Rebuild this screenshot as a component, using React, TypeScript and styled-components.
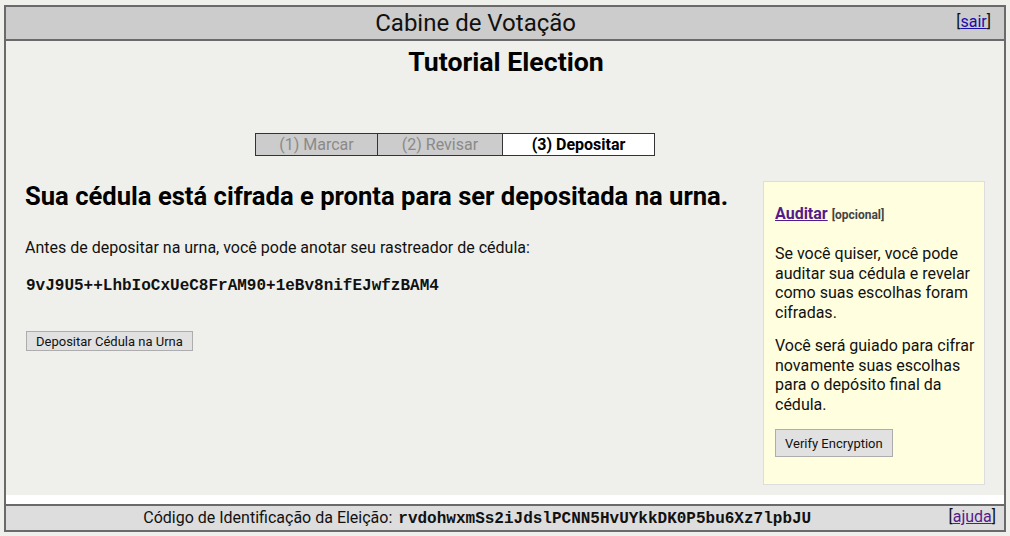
import React from "react";
import styled, { createGlobalStyle } from "styled-components";

const Global = createGlobalStyle`
  html, body { margin: 0; padding: 0; background: #eff0eb; }
  body { font-family: Roboto, "Liberation Sans", Arial, sans-serif; color: #111; }
  * { box-sizing: border-box; }
`;

const Frame = styled.div`
  margin: 5px 4px 0 4px;
  width: 1002px;
  height: 527px;
  border: 2px solid #6a6a6a;
  display: flex;
  flex-direction: column;
  background: #fff;
`;

const Bar = styled.div<{ $h: number; $bg: string; $top?: boolean; $pr: number }>`
  height: ${(p) => p.$h}px;
  background: ${(p) => p.$bg};
  ${(p) => (p.$top ? "border-top" : "border-bottom")}: 2px solid #6a6a6a;
  display: flex;
  align-items: center;
  padding-right: ${(p) => p.$pr}px;
`;

const BarText = styled.div<{ $size: number; $pr?: number }>`
  flex: 1;
  text-align: center;
  font-size: ${(p) => p.$size}px;
  padding-right: ${(p) => p.$pr ?? 0}px;
  color: #111;
  white-space: nowrap;
`;

const BarLink = styled.div<{ $color: string; $dy: number }>`
  font-size: 16px;
  color: #111;
  align-self: flex-start;
  margin-top: ${(p) => p.$dy}px;
  a { color: ${(p) => p.$color}; }
`;

const Content = styled.div`
  height: 454px;
  background: #eff0eb;
  padding: 0 17px 0 19px;
`;

const Title = styled.h1`
  margin: 5px 0 0;
  text-align: center;
  font-size: 26.7px;
  font-weight: bold;
  line-height: 33px;
  color: #000;
`;

const Progress = styled.div`
  display: flex;
  width: 400px;
  margin: 54px 0 0 230px;
  border: 1px solid #333;
`;

const Step = styled.div<{ $w: number; $active?: boolean }>`
  width: ${(p) => p.$w}px;
  height: 21px;
  line-height: 21px;
  text-align: center;
  font-size: 16px;
  background: ${(p) => (p.$active ? "#fff" : "#cccccc")};
  color: ${(p) => (p.$active ? "#000" : "#8a8a8a")};
  font-weight: ${(p) => (p.$active ? "bold" : "normal")};
  & + & { border-left: 1px solid #333; }
`;

const Main = styled.div`
  display: flex;
  justify-content: space-between;
  margin-top: 24px;
`;

const Left = styled.div``;

const Heading = styled.h2`
  margin: 0;
  font-size: 25.6px;
  line-height: 32px;
  font-weight: bold;
  color: #000;
`;

const Para = styled.p`
  margin: 26px 0 0;
  font-size: 16px;
  line-height: 19px;
  color: #111;
`;

const Tracker = styled.div`
  margin: 20px 0 0 1px;
  font-family: "Courier New", Courier, "Nimbus Mono PS", "FreeMono", "Liberation Mono", monospace;
  font-weight: bold;
  font-size: 16px;
  line-height: 19px;
  color: #111;
`;

const Button = styled.button<{ $h: number; $pad: number }>`
  font-family: Roboto, "Liberation Sans", Arial, sans-serif;
  font-size: 13px;
  height: ${(p) => p.$h}px;
  padding: 0 ${(p) => p.$pad}px;
  background: #e1e1e1;
  border: 1px solid #adadad;
  color: #111;
  border-radius: 0;
`;

const DepositButton = styled(Button)`
  margin: 35px 0 0 1px;
  display: block;
`;

const Panel = styled.div`
  width: 222px;
  height: 304px;
  margin: 1px 2px 0 0;
  background: #ffffe0;
  border: 1px solid #dddddd;
  padding: 22px 4px 0 11px;
`;

const AuditTitle = styled.div`
  font-size: 16px;
  line-height: 20px;
  a { color: #551a8b; font-weight: bold; }
  span { font-size: 12px; font-weight: bold; color: #444; }
`;

const PanelPara = styled.p`
  margin: 19px 0 0;
  font-size: 16px;
  line-height: 19.5px;
  color: #111;
  & + & { margin-top: 14px; }
`;

const VerifyButton = styled(Button)`
  margin-top: 15px;
  display: block;
`;

const Spacer = styled.div`
  height: 9px;
  background: #fff;
`;

const Mono = styled.span`
  font-family: "Courier New", Courier, "Nimbus Mono PS", "FreeMono", "Liberation Mono", monospace;
  font-weight: bold;
  margin-left: 6px;
`;

export default function App() {
  return (
    <>
      <Global />
      <Frame>
        <Bar $h={34} $bg="#cccccc" $pr={13}>
          <BarText $size={24} $pr={11}>Cabine de Votação</BarText>
          <BarLink $color="#1a0dab" $dy={5}>
            [<a href="#">sair</a>]
          </BarLink>
        </Bar>
        <Content>
          <Title>Tutorial Election</Title>
          <Progress>
            <Step $w={121}>(1) Marcar</Step>
            <Step $w={125}>(2) Revisar</Step>
            <Step $w={152} $active>
              (3) Depositar
            </Step>
          </Progress>
          <Main>
            <Left>
              <Heading>Sua cédula está cifrada e pronta para ser depositada na urna.</Heading>
              <Para>Antes de depositar na urna, você pode anotar seu rastreador de cédula:</Para>
              <Tracker>9vJ9U5++LhbIoCxUeC8FrAM90+1eBv8nifEJwfzBAM4</Tracker>
              <DepositButton $h={20} $pad={9}>Depositar Cédula na Urna</DepositButton>
            </Left>
            <Panel>
              <AuditTitle>
                <a href="#">Auditar</a> <span>[opcional]</span>
              </AuditTitle>
              <PanelPara>
                Se você quiser, você pode auditar sua cédula e revelar como suas escolhas foram cifradas.
              </PanelPara>
              <PanelPara>
                Você será guiado para cifrar novamente suas escolhas para o depósito final da cédula.
              </PanelPara>
              <VerifyButton $h={28} $pad={9}>Verify Encryption</VerifyButton>
            </Panel>
          </Main>
        </Content>
        <Spacer />
        <Bar $h={26} $bg="#dddddd" $top $pr={8}>
          <BarText $size={16}>
            Código de Identificação da Eleição:
            <Mono>rvdohwxmSs2iJdslPCNN5HvUYkkDK0P5bu6Xz7lpbJU</Mono>
          </BarText>
          <BarLink $color="#551a8b" $dy={1}>
            [<a href="#">ajuda</a>]
          </BarLink>
        </Bar>
      </Frame>
    </>
  );
}
